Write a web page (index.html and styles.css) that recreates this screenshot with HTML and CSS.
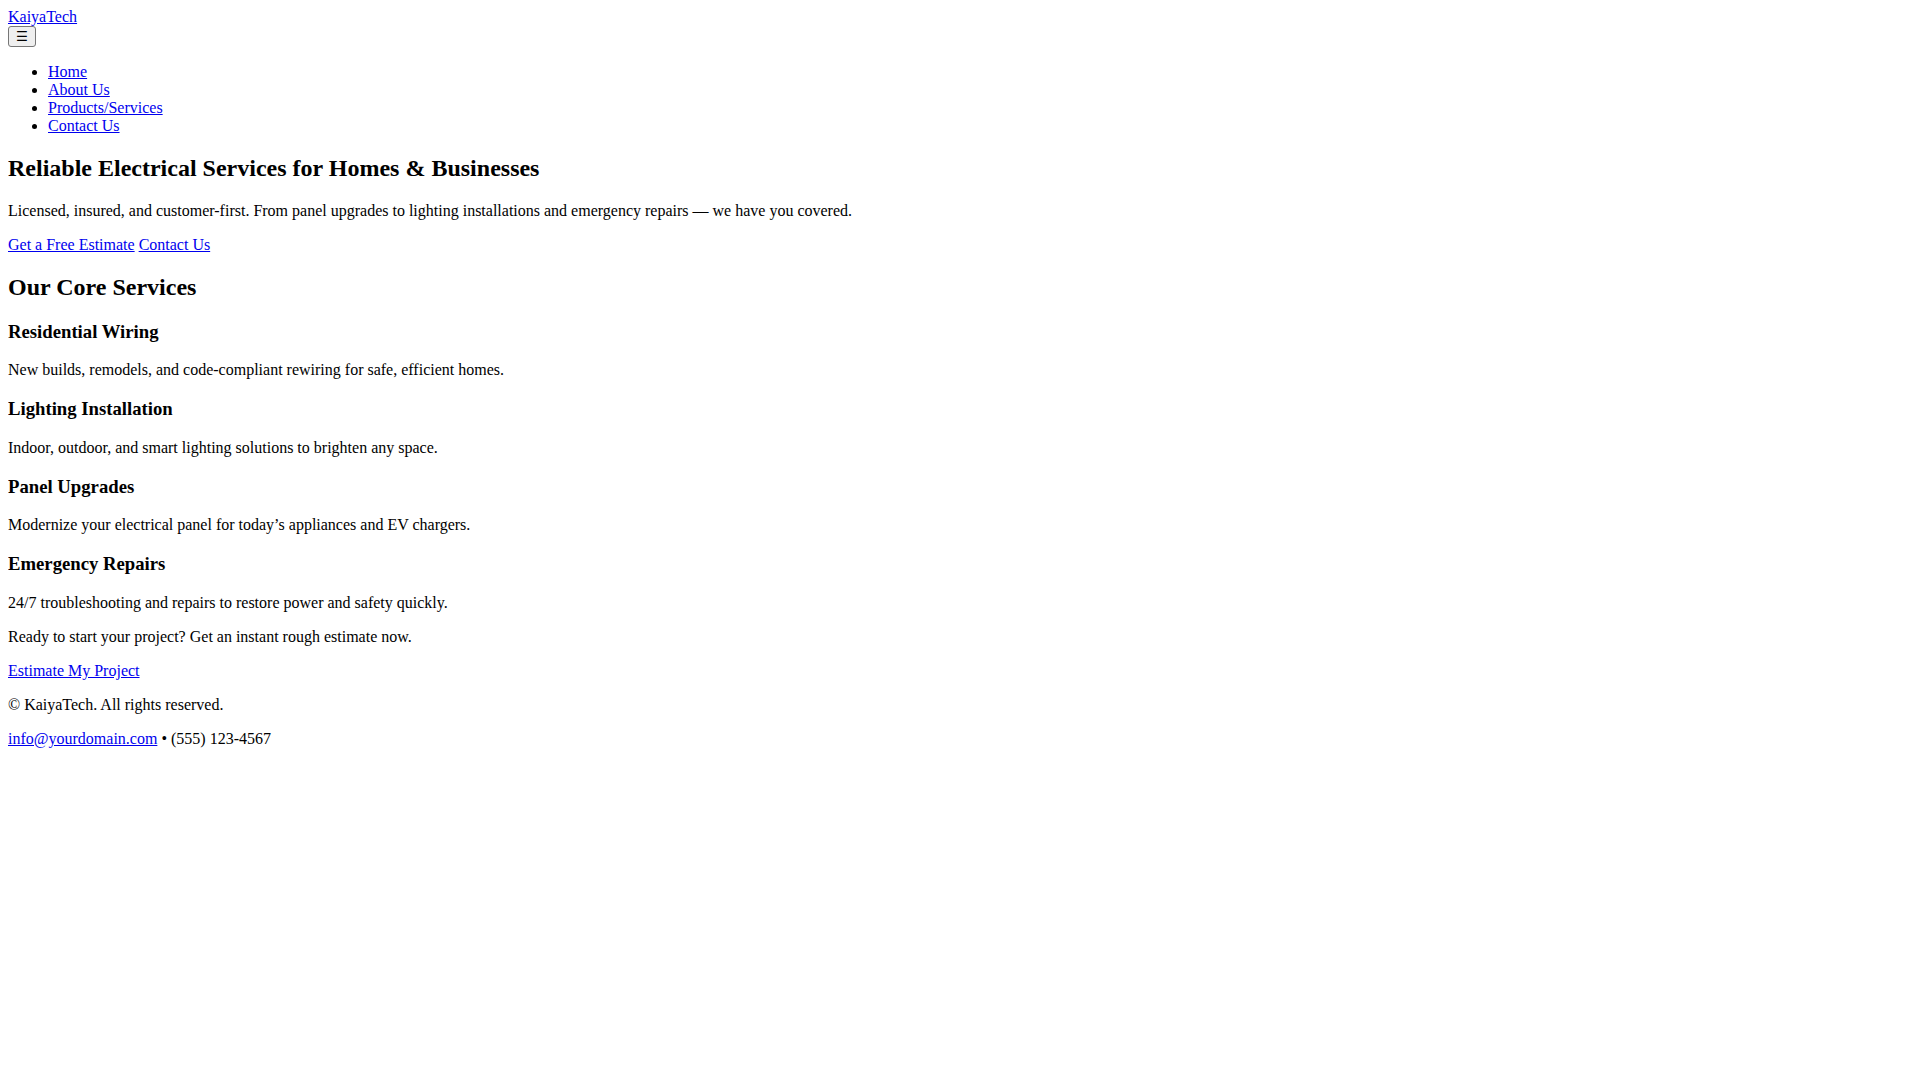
FILE: index.html
```html
<!DOCTYPE html>
<html lang="en">
<head>
<meta charset="utf-8">
<title>KaiyaTech</title>
<link rel="stylesheet" href="styles.css">
</head>
<body class="page">
<header class="site-header">
  <div class="brand-row"><a class="brand" href="#">KaiyaTech</a></div>
  <button class="menu-toggle" type="button">☰</button>
  <nav>
    <ul class="nav-list">
      <li><a href="#">Home</a></li>
      <li><a href="#">About Us</a></li>
      <li><a href="#">Products/Services</a></li>
      <li><a href="#">Contact Us</a></li>
    </ul>
  </nav>
</header>
<main>
  <section class="hero">
    <h1 class="title">Reliable Electrical Services for Homes &amp; Businesses</h1>
    <p class="text">Licensed, insured, and customer-first. From panel upgrades to lighting installations and emergency repairs — we have you covered.</p>
    <p class="text"><a href="#">Get a Free Estimate</a> <a href="#">Contact Us</a></p>
  </section>
  <section class="services">
    <h2 class="title">Our Core Services</h2>
    <div class="service">
      <h3 class="subtitle">Residential Wiring</h3>
      <p class="text">New builds, remodels, and code-compliant rewiring for safe, efficient homes.</p>
    </div>
    <div class="service">
      <h3 class="subtitle">Lighting Installation</h3>
      <p class="text">Indoor, outdoor, and smart lighting solutions to brighten any space.</p>
    </div>
    <div class="service">
      <h3 class="subtitle">Panel Upgrades</h3>
      <p class="text">Modernize your electrical panel for today’s appliances and EV chargers.</p>
    </div>
    <div class="service">
      <h3 class="subtitle">Emergency Repairs</h3>
      <p class="text">24/7 troubleshooting and repairs to restore power and safety quickly.</p>
    </div>
  </section>
  <section class="cta">
    <p class="text">Ready to start your project? Get an instant rough estimate now.</p>
    <p class="text"><a href="#">Estimate My Project</a></p>
  </section>
</main>
<footer>
  <p class="text">© KaiyaTech. All rights reserved.</p>
  <p class="text"><a href="#">info@yourdomain.com</a> • (555) 123-4567</p>
</footer>
</body>
</html>
```

FILE: styles.css
```css
html { background: #fff; }
.page {
  margin: 8px;
  font-family: "Liberation Serif", "Times New Roman", serif;
  font-size: 16px;
  color: #000;
}
a { color: #0000ee; text-decoration: underline; }
.menu-toggle {
  font-family: "DejaVu Sans", sans-serif;
  font-size: 13.33px;
  line-height: 15px;
  padding: 2px 7px;
  border: 1px solid #767676;
  border-radius: 3px;
  background: #efefef;
  color: #000;
  margin: 0;
}
.nav-list {
  margin: 16px 0;
  padding-left: 40px;
  list-style: disc;
}
.title {
  font-size: 24px;
  font-weight: bold;
  margin: 19.92px 0;
}
.subtitle {
  font-size: 18.72px;
  font-weight: bold;
  margin: 18.72px 0;
}
.text { margin: 16px 0; }
```
